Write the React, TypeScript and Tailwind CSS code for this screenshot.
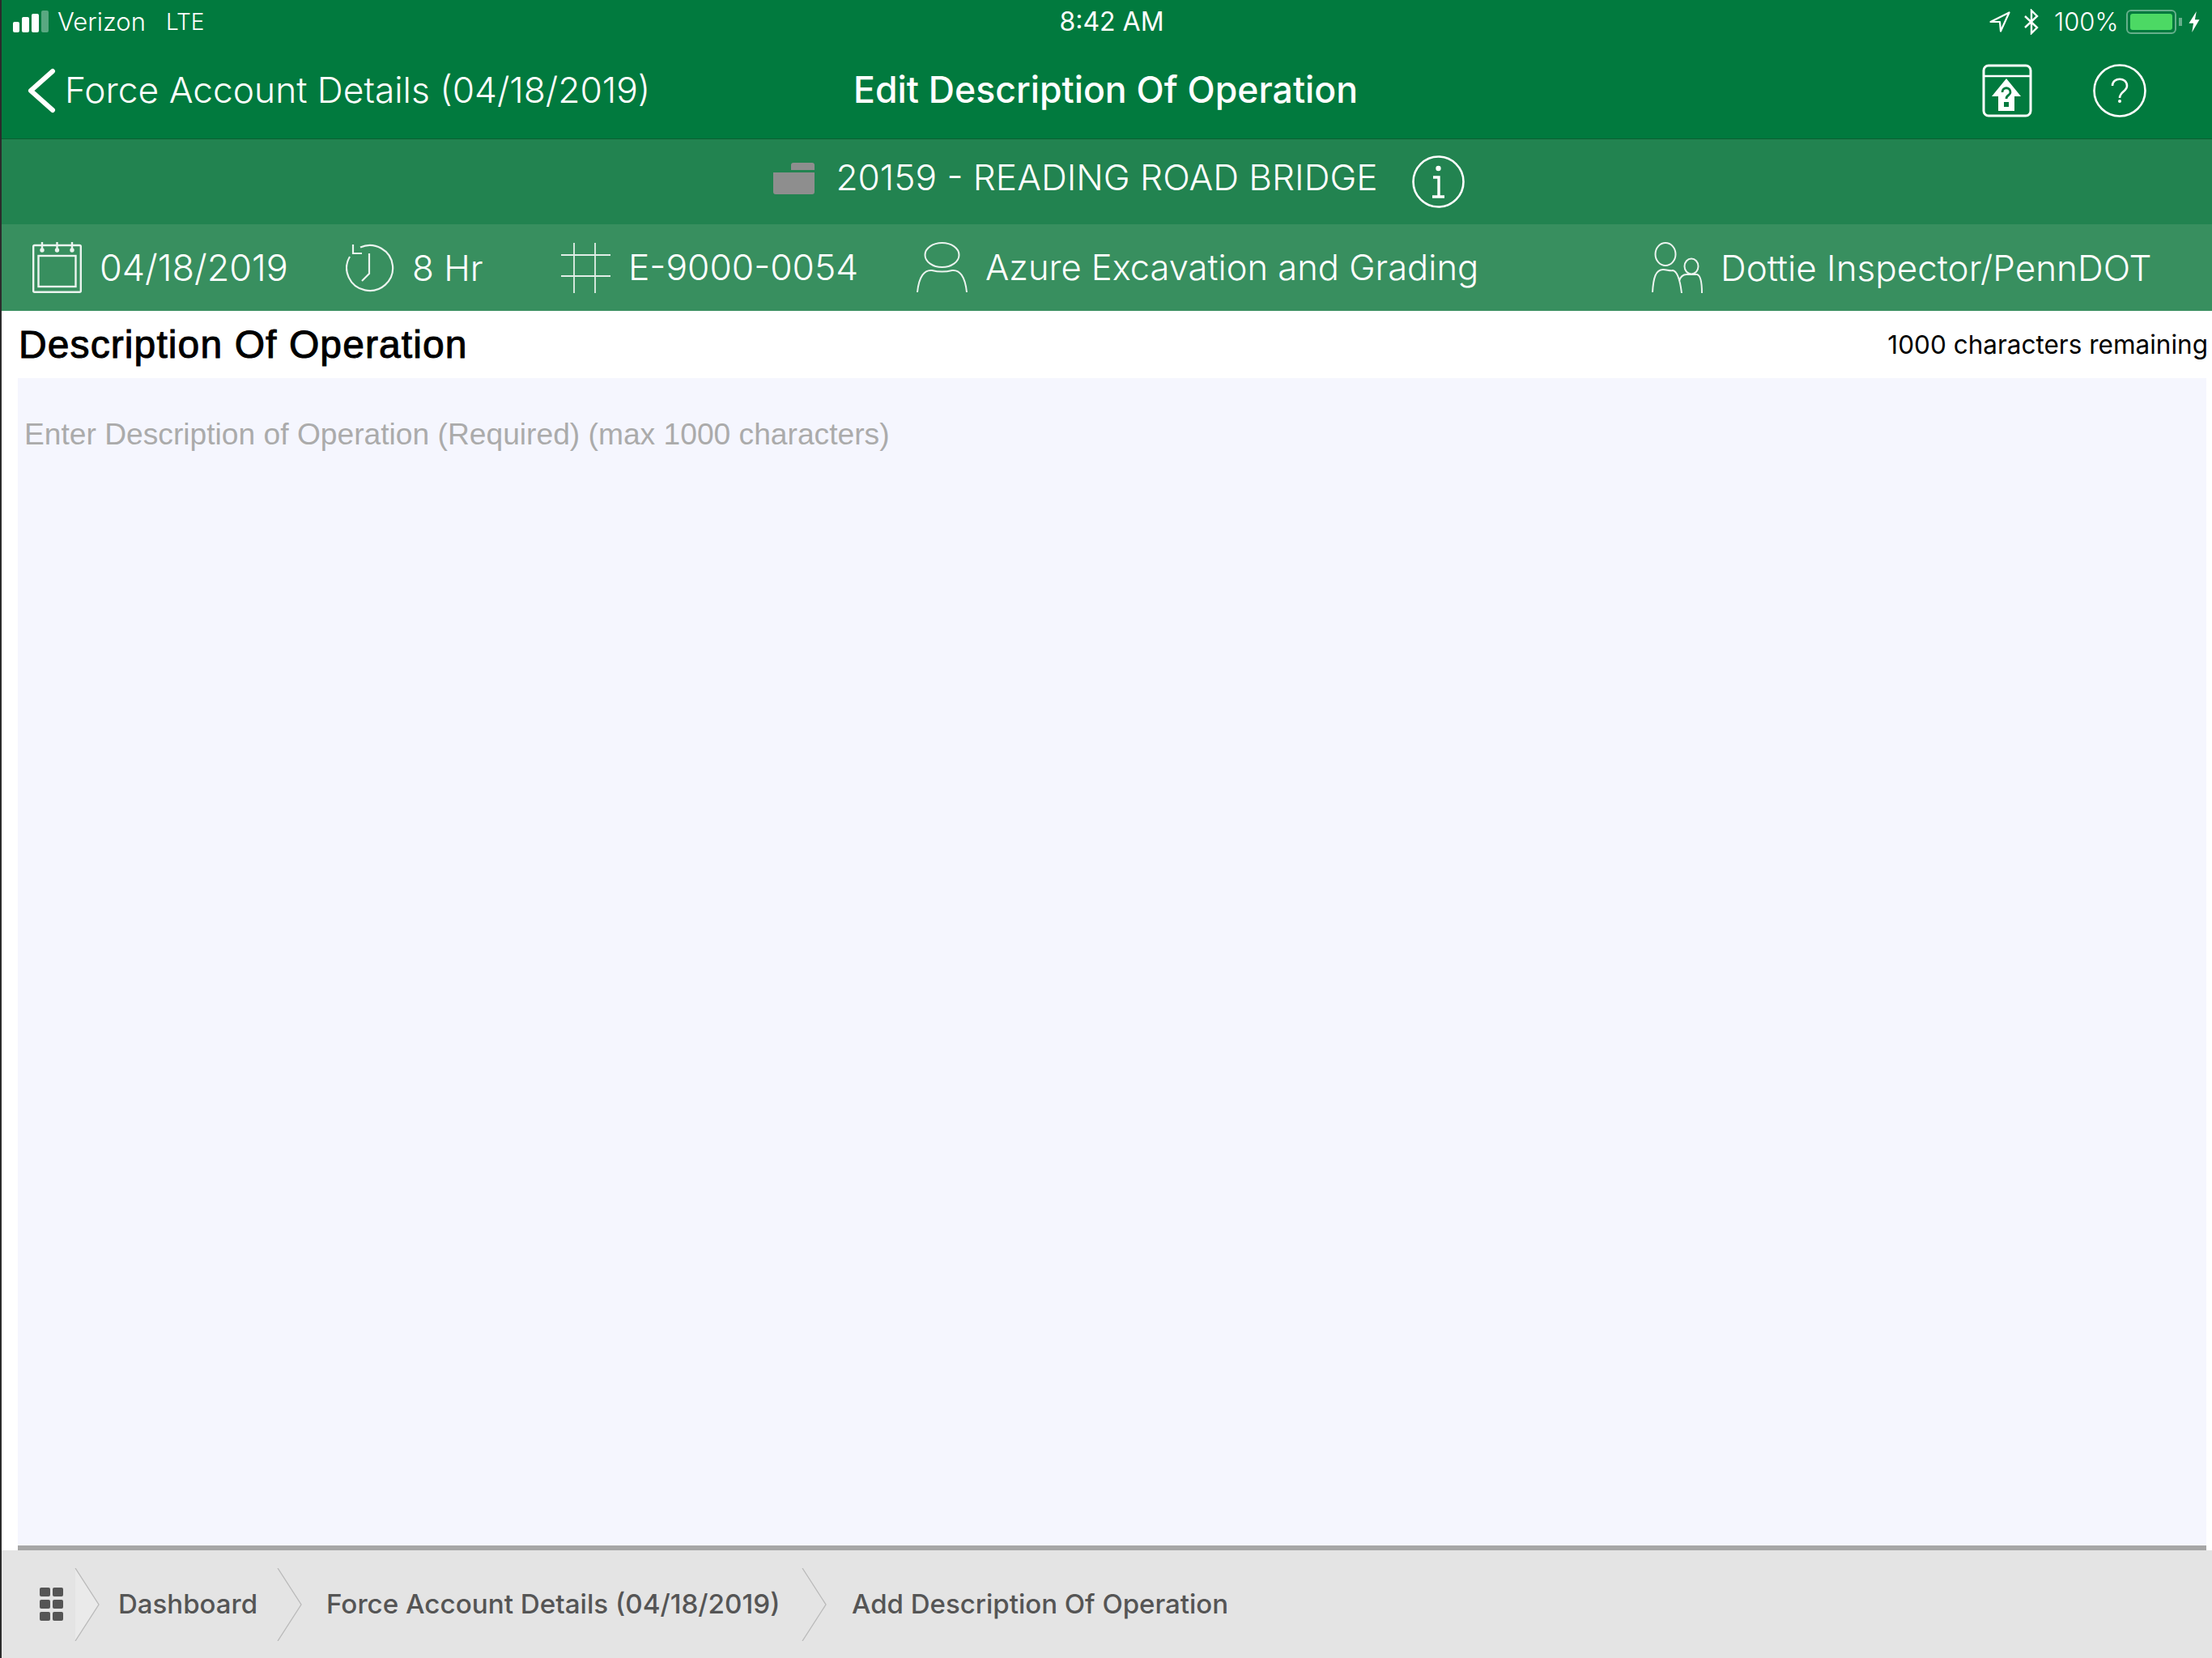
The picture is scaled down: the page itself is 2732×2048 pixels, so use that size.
import type { ReactNode } from "react";

const sf = "font-['Inter','Liberation_Sans',sans-serif]";
const hv = "font-['Liberation_Sans',Arial,sans-serif]";

function Calendar() {
  return (
    <svg width="61" height="63" viewBox="0 0 61 63" fill="none" stroke="#fff" strokeWidth="2.4" opacity="0.9">
      <rect x="1.2" y="4" width="58.6" height="57.8" rx="1.5" />
      <rect x="7.5" y="17" width="46" height="38" />
      <path d="M12 0v10M30.5 0v10M49 0v10" />
      <circle cx="12" cy="10" r="1.5" fill="#fff" /><circle cx="30.5" cy="10" r="1.5" fill="#fff" /><circle cx="49" cy="10" r="1.5" fill="#fff" />
    </svg>
  );
}
function Clock() {
  return (
    <svg width="60" height="62" viewBox="0 0 60 62" fill="none" stroke="#fff" strokeWidth="2.2" opacity="0.9">
      <path d="M18 5.5A28.5 28 0 1 1 5 17" />
      <path d="M9 2v11h11" />
      <path d="M29 13v25l-9 9" />
    </svg>
  );
}
function Hash() {
  return (
    <svg width="61" height="62" viewBox="0 0 61 62" fill="none" stroke="#fff" strokeWidth="1.8" opacity="0.85">
      <path d="M16 0v62M42 0v62M0 15h61M0 41h61" />
    </svg>
  );
}
function Person() {
  return (
    <svg width="63" height="64" viewBox="0 0 63 64" fill="none" stroke="#fff" strokeWidth="2" opacity="0.9">
      <ellipse cx="31.5" cy="16" rx="21" ry="15" />
      <path d="M1 62C3 42 10 34 19 35c8 2 17 2 25 0 9-1 16 7 18 27" />
    </svg>
  );
}
function People() {
  return (
    <svg width="63" height="64" viewBox="0 0 63 64" fill="none" stroke="#fff" strokeWidth="2" opacity="0.9">
      <ellipse cx="17" cy="15" rx="12.5" ry="14" />
      <ellipse cx="49" cy="30" rx="8.5" ry="9.5" />
      <path d="M1 62C2 44 5 34 14 34c5 0 8 2 12 1 6 1 9 12 11 28" />
      <path d="M34 48c1-5 5-8 9-8h13c4 1 6 10 6 23" />
    </svg>
  );
}
function Meta({ cell, size, icon, text }: { cell: string; size: string; icon: ReactNode; text: string }) {
  return (
    <div className={`flex items-center shrink-0 ${cell}`}>
      <div className="flex shrink-0">{icon}</div>
      <span className={`${sf} ${size} font-light leading-none text-white whitespace-nowrap`}>{text}</span>
    </div>
  );
}
function Crumb({ fill }: { fill: string }) {
  return (
    <svg width="32" height="90" viewBox="0 0 32 90" fill="none" className="shrink-0">
      <path d="M1 0l29 45L1 90" fill={fill} stroke="#B9B9B9" strokeWidth="1.3" />
    </svg>
  );
}

export default function App() {
  return (
    <div className="w-[2732px] h-[2048px] flex flex-col bg-white border-l-2 border-[#2b2b2b] overflow-hidden">
      <header className="h-[172px] shrink-0 bg-[#017A3E] border-b border-[#0b5f33] text-white flex flex-col">
        <div className={`${sf} h-[54px] grid grid-cols-[1fr_auto_1fr] items-center pl-[14px] pr-[12px] text-[31px] font-light`}>
          <div className="flex items-center">
            <div className="flex items-end gap-[3px] h-[26px] w-[55px]">
              <span className="w-[8px] h-[13px] rounded-[2px] bg-white" />
              <span className="w-[9px] h-[19px] rounded-[2px] bg-white" />
              <span className="w-[9px] h-[23px] rounded-[2px] bg-white" />
              <span className="w-[9px] h-[27px] rounded-[2px] bg-white/35" />
            </div>
            <span>Verizon</span>
            <span className="ml-[25px] text-[28px]">LTE</span>
          </div>
          <span className="pl-[10px] text-[32px] font-normal">8:42 AM</span>
          <div className="flex items-center justify-end">
            <svg width="26" height="26" viewBox="0 0 26 26" fill="none" stroke="#fff" strokeWidth="2.2" className="mr-[16px]">
              <path d="M1.5 13L24.5 1.5 14 24.5l-1-11.5z" strokeLinejoin="round" />
            </svg>
            <svg width="20" height="32" viewBox="0 0 20 32" fill="none" stroke="#fff" strokeWidth="2.4" className="mr-[18px]">
              <path d="M2 9l15 14-7 7V2l7 7L2 23" />
            </svg>
            <span className="w-[85px] whitespace-nowrap">100%</span>
            <div className="ml-[4px] w-[62px] h-[30px] rounded-[6px] border-2 border-white/40 p-[3px]">
              <div className="w-full h-full rounded-[3px] bg-[#4CD964]" />
            </div>
            <span className="ml-[3px] w-[4px] h-[10px] bg-white/40 mr-[7px]" />
            <svg width="16" height="26" viewBox="0 0 16 28" fill="#fff" className="mr-[2px]"><path d="M11 0L1 16h6L5 28l10-17H9z" /></svg>
          </div>
        </div>
        <div className={`${sf} flex-1 flex items-center pl-[31px] pb-[2px]`}>
          <svg width="38" height="56" viewBox="0 0 38 56" fill="none" stroke="#fff" strokeWidth="6" strokeLinecap="round" strokeLinejoin="round" className="mr-[9px]">
            <path d="M32 4L5 28l27 24" />
          </svg>
          <span className="text-[44.3px] font-light leading-none whitespace-nowrap w-[974px]">Force Account Details (04/18/2019)</span>
          <span className="text-[44.6px] font-medium leading-none whitespace-nowrap">Edit Description Of Operation</span>
          <div className="ml-auto mr-[81px] flex items-center gap-[75px]">
            <svg width="62" height="66" viewBox="0 0 62 66" fill="none">
              <rect x="2" y="2" width="58" height="62" rx="6" stroke="#fff" strokeWidth="3" />
              <path d="M2 15h58" stroke="#fff" strokeWidth="2.5" />
              <path d="M30 18L48 40H40V58H20V40H12z" fill="#fff" />
              <path d="M25 35c0-7 10-7 10 0 0 4-5 3-5 8" stroke="#017A3E" strokeWidth="2.8" />
              <rect x="27" y="47" width="6" height="6" fill="#017A3E" />
            </svg>
            <svg width="66" height="66" viewBox="0 0 66 66" fill="none" stroke="#fff">
              <circle cx="33" cy="33" r="31.5" strokeWidth="2.6" />
              <path d="M24 27c0-11 18-11 18 0 0 7-9 7-9 15" strokeWidth="2.6" />
              <circle cx="33" cy="46" r="2" fill="#fff" stroke="none" />
            </svg>
          </div>
        </div>
      </header>

      <div className={`${sf} h-[105px] shrink-0 bg-[#228350] flex items-center justify-center text-white pl-[30px]`}>
        <svg width="51" height="40" viewBox="0 0 51 40" fill="#8E8E8E" className="mr-[26px] mb-[10px]">
          <path d="M0 10h22V4a3 3 0 0 1 3-3h23a3 3 0 0 1 3 3v6zM0 13h51v24a3 3 0 0 1-3 3H3a3 3 0 0 1-3-3z" />
        </svg>
        <span className="text-[44.2px] font-light leading-none whitespace-nowrap mb-[10px]">20159 - READING ROAD BRIDGE</span>
        <svg width="65" height="65" viewBox="0 0 65 65" fill="none" stroke="#fff" className="ml-[42px]">
          <circle cx="32.5" cy="32.5" r="31" strokeWidth="2.6" />
          <circle cx="32.5" cy="16" r="3.2" fill="#fff" stroke="none" />
          <path d="M26 27h7v24M25 51h15" strokeWidth="3.4" />
        </svg>
      </div>

      <div className="h-[107px] shrink-0 bg-[#388F5F] flex items-center pl-[38px] [&>div>div]:mr-[22px]">
        <Meta cell="w-[387px]" size="text-[45px]" icon={<Calendar />} text="04/18/2019" />
        <Meta cell="w-[266px]" size="text-[44px]" icon={<Clock />} text="8 Hr" />
        <Meta cell="w-[439px]" size="text-[44.3px]" icon={<Hash />} text="E-9000-0054" />
        <Meta cell="w-[908px]" size="text-[43.5px]" icon={<Person />} text="Azure Excavation and Grading" />
        <Meta cell="w-[690px]" size="text-[44px]" icon={<People />} text="Dottie Inspector/PennDOT" />
      </div>

      <div className="h-[83px] shrink-0 flex items-center justify-between pl-[21px] pr-[5px] text-black">
        <span className={`${hv} text-[48px] font-normal leading-none tracking-[1.1px] [-webkit-text-stroke:1px_#000]`}>Description Of Operation</span>
        <span className={`${sf} text-[31.5px] leading-none`}>1000 characters remaining</span>
      </div>

      <div className="flex-1 ml-[20px] mr-[7px] bg-[#F5F6FE] border-b-[6px] border-[#A6A6A6] pl-[8px] pt-[51px]">
        <span className={`${hv} block text-[37.2px] leading-[36px] text-[#ABABAB]`}>Enter Description of Operation (Required) (max 1000 characters)</span>
      </div>

      <footer className={`${sf} h-[133px] shrink-0 bg-[#E4E4E4] flex items-center pl-[47px] text-[33px] font-medium text-[#555555]`}>
        <div className="grid grid-cols-2 gap-x-[3px] gap-y-[4px] w-[29px] mr-[14px]">
          {[0, 1, 2, 3, 4, 5].map((i) => (
            <span key={i} className="h-[11px] bg-[#555555] rounded-[2px]" />
          ))}
        </div>
        <Crumb fill="#EAEAEA" />
        <span className="ml-[22px] w-[196px] whitespace-nowrap">Dashboard</span>
        <Crumb fill="none" />
        <span className="ml-[29px] w-[587px] whitespace-nowrap text-[33.2px]">Force Account Details (04/18/2019)</span>
        <Crumb fill="none" />
        <span className="ml-[30px] whitespace-nowrap">Add Description Of Operation</span>
      </footer>
    </div>
  );
}
